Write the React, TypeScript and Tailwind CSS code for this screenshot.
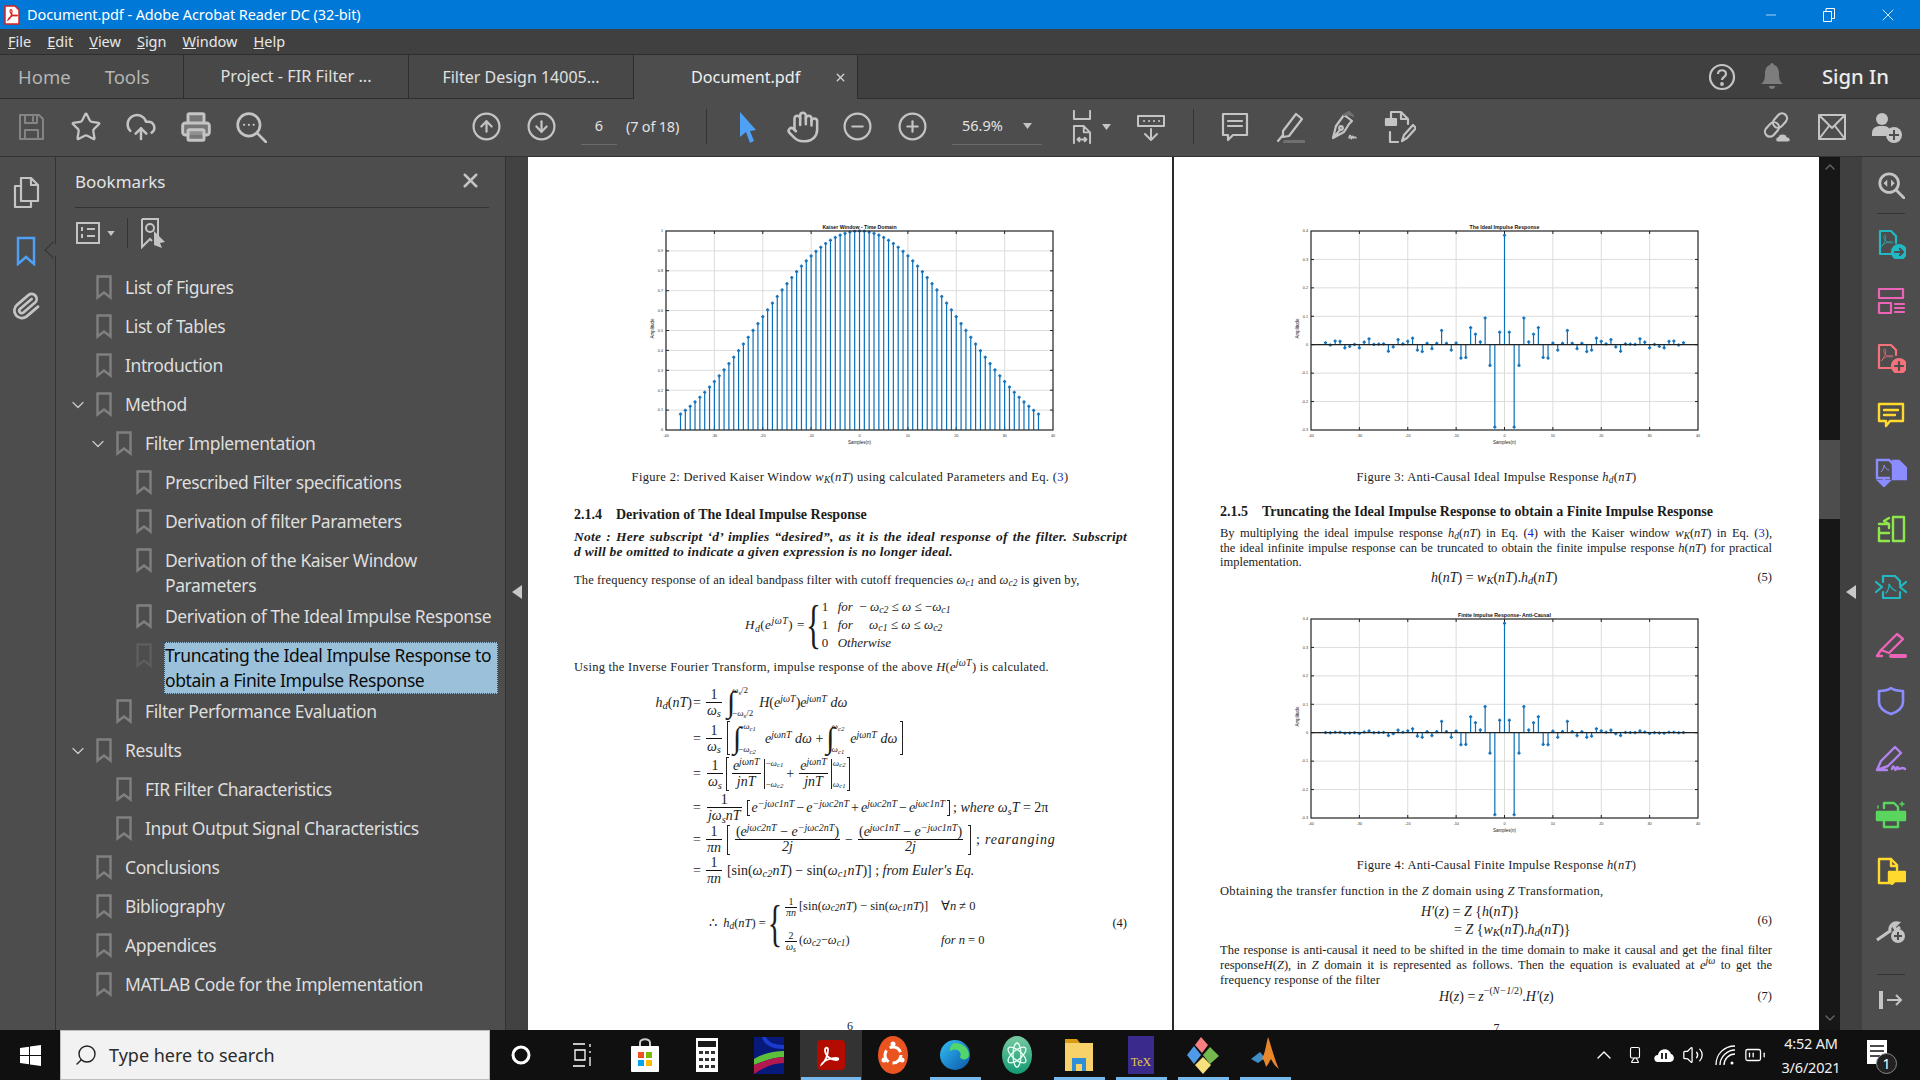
import type { ReactNode } from 'react'
import {
  Star, CloudUpload, Printer, CircleArrowUp, CircleArrowDown, Hand, CircleMinus, CirclePlus,
  Paperclip, ChevronDown, ChevronUp, X, Minus, Search, Volume2, BatteryMedium, Video,
} from 'lucide-react'

const ui = "font-['Noto_Sans',sans-serif]"
const gray = '#c4c4c4'

function Svg({ w = 30, h = 30, vb = '0 0 30 30', children, c = gray, sw = 2 }: { w?: number; h?: number; vb?: string; children: ReactNode; c?: string; sw?: number }) {
  return (
    <svg width={w} height={h} viewBox={vb} fill="none" stroke={c} strokeWidth={sw} strokeLinecap="round" strokeLinejoin="round">
      {children}
    </svg>
  )
}

const swirl = 'M6 22c3-2 6-9 6-14 0-3-3-3-3 0 0 5 6 9 11 9 3 0 3-2 0-2-5 0-12 3-14 7z'

function ToolBox({ children, w = 55 }: { children: ReactNode; w?: number }) {
  return <div className="flex items-center justify-center h-full shrink-0" style={{ width: w }}>{children}</div>
}

function Sep({ className = '' }: { className?: string }) {
  return <div className={`h-[35px] w-px bg-[#333] shrink-0 ${className}`} />
}

function TitleBar() {
  return (
    <div className={`flex h-[29px] items-center bg-[#0078d7] text-white ${ui}`}>
      <div className="ml-[4px] mr-[7px]">
        <svg width="16" height="20" viewBox="0 0 16 20">
          <path d="M1 1h10l4 4v14H1z" fill="#fff" stroke="#d8231d" strokeWidth="1.5" />
          <path d="M4 15c2-1 4-5 4-9 0-2-2-2-2 0 0 3 3 5 6 5 2 0 2-1 0-1-3 0-7 2-8 5z" fill="none" stroke="#d8231d" strokeWidth="1.2" />
        </svg>
      </div>
      <span className="text-[14.5px] tracking-[-0.1px]">Document.pdf - Adobe Acrobat Reader DC (32-bit)</span>
      <div className="ml-auto flex items-center pr-[3px]">
        <div className="w-[56px] flex justify-center"><Minus size={16} strokeWidth={1} /></div>
        <div className="w-[59px] flex justify-center">
          <svg width="12" height="14" viewBox="0 0 12 14" fill="none" stroke="#fff"><path d="M.5 3.5h8v10h-8zM3 3.5v-3h8.500v10H8.500" /></svg>
        </div>
        <div className="w-[59px] flex justify-center"><X size={20} strokeWidth={1} /></div>
      </div>
    </div>
  )
}

function MenuBar() {
  const items: [string, string][] = [['F', 'ile'], ['E', 'dit'], ['V', 'iew'], ['S', 'ign'], ['W', 'indow'], ['H', 'elp']]
  return (
    <div className={`flex h-[26px] items-center gap-[16px] border-b border-[#2e2e2e] bg-[#404040] pl-[8px] text-[14.5px] text-[#e8e8e8] ${ui}`}>
      {items.map(([a, b]) => <span key={a}><span className="underline">{a}</span>{b}</span>)}
    </div>
  )
}

function TabBar() {
  return (
    <div className={`flex h-[44px] border-b border-[#2e2e2e] bg-[#404040] ${ui}`}>
      <div className="flex w-[184px] items-center gap-[34px] border-r border-[#2e2e2e] bg-[#484848] pl-[18px] text-[18.500px] text-[#b5b5b5]">
        <span>Home</span><span>Tools</span>
      </div>
      <div className="flex w-[225px] items-center justify-center border-r border-[#2e2e2e] bg-[#484848] text-[16.300px] text-[#e0e0e0]">Project - FIR Filter ...</div>
      <div className="flex w-[225px] items-center justify-center border-r border-[#2e2e2e] bg-[#484848] text-[16px] text-[#e0e0e0]">Filter Design 14005...</div>
      <div className="-mb-px flex w-[224px] items-center border-r border-[#2e2e2e] bg-[#4d4d4d] text-[16.200px] text-[#f0f0f0]">
        <span className="ml-[57px]">Document.pdf</span>
        <X size={13} strokeWidth={2.5} className="ml-auto mr-[10px] text-[#d0d0d0]" />
      </div>
      <div className="ml-auto flex items-center">
        <svg width="28" height="32" viewBox="0 0 28 32" fill="none" stroke={gray} strokeWidth="2.2">
          <circle cx="14" cy="16" r="12" />
          <path d="M10 13c0-5 8-5 8 0 0 3-4 3-4 6" />
          <circle cx="14" cy="23" r=".8" fill={gray} />
        </svg>
        <svg className="ml-[24px]" width="24" height="32" viewBox="0 0 24 32" fill="#7d7d7d">
          <path d="M12 2c1 0 2 1 2 2 4 1 5 5 5 9 0 5 1 8 4 10H1c3-2 4-5 4-10 0-4 1-8 5-9 0-1 1-2 2-2zM9 25h6c0 4-6 4-6 0z" />
        </svg>
        <span className="ml-[38px] mr-[31px] text-[20.300px] font-medium text-[#ececec]">Sign In</span>
      </div>
    </div>
  )
}

function ToolBar() {
  return (
    <div className={`flex h-[58px] items-center border-b border-[#333] bg-[#4d4d4d] pb-[2px] pl-[3px] ${ui}`}>
      <ToolBox>
        <Svg c="#848484"><path d="M4 3h19l4 4v20H4zM9 3v8h12V3M17 5v4M9 27v-9h13v9" /></Svg>
      </ToolBox>
      <ToolBox><Star size={32} color={gray} strokeWidth={1.7} /></ToolBox>
      <ToolBox><CloudUpload size={32} color={gray} strokeWidth={1.9} /></ToolBox>
      <ToolBox><Printer size={32} color={gray} fill={gray} fillOpacity={0.35} strokeWidth={2.2} /></ToolBox>
      <ToolBox>
        <Svg w={32} h={32}>
          <circle cx="13" cy="13" r="10.500" strokeWidth="2.500" />
          <path d="M21 21l8 8" strokeWidth="2.500" />
          <path d="M8.500 13h.1M13 13h.1M17.500 13h.1" />
        </Svg>
      </ToolBox>
      <div className="w-[181px] shrink-0" />
      <ToolBox><CircleArrowUp size={31} color={gray} strokeWidth={1.7} /></ToolBox>
      <ToolBox><CircleArrowDown size={31} color={gray} strokeWidth={1.7} /></ToolBox>
      <div className="ml-[12px] flex h-[37px] w-[36px] shrink-0 items-center justify-center border-b border-[#6a6a6a] text-[14.5px] text-[#e2e2e2]">6</div>
      <span className="ml-[9px] w-[55px] shrink-0 whitespace-nowrap text-[14.5px] tracking-[-0.2px] text-[#e2e2e2]">(7 of 18)</span>
      <Sep className="ml-[25px]" />
      <div className="w-[13px] shrink-0" />
      <ToolBox>
        <svg width="18" height="32" viewBox="0 0 18 32" fill="#4ea1f5"><path d="M1 1l16 18-6 1 4 10-4 2-4-11-6 5z" /></svg>
      </ToolBox>
      <ToolBox><Hand size={34} color={gray} strokeWidth={1.8} /></ToolBox>
      <ToolBox><CircleMinus size={31} color={gray} strokeWidth={1.7} /></ToolBox>
      <ToolBox><CirclePlus size={31} color={gray} strokeWidth={1.7} /></ToolBox>
      <div className="ml-[12px] flex h-[37px] w-[90px] shrink-0 items-center border-b border-[#6a6a6a] pl-[10px] text-[14.5px] text-[#e2e2e2]">
        56.9%
        <svg className="ml-auto mr-[10px]" width="9" height="6" viewBox="0 0 9 6" fill={gray}><path d="M0 0h9L4.500 6z" /></svg>
      </div>
      <div className="ml-[21px] flex w-[38px] justify-center">
        <Svg w={24} h={34} vb="0 0 24 38" sw={2.2}>
          <path d="M3 1v9h18V1M3 37V18h11l7 7v12M14 18v7h7M7 33h10M7 33l2-2M7 33l2 2M17 33l-2-2M17 33l-2 2" />
        </Svg>
      </div>
      <svg className="ml-[1px]" width="9" height="6" viewBox="0 0 9 6" fill={gray}><path d="M0 0h9L4.500 6z" /></svg>
      <ToolBox w={79}>
        <Svg w={30} h={30}>
          <path d="M2 4h26v10H2zM8 9h.1M13 9h.1M18 9h.1M23 9h.1M15 17v11M9 22l6 6 6-6" />
        </Svg>
      </ToolBox>
      <Sep className="ml-[3px]" />
      <div className="w-[13px] shrink-0" />
      <ToolBox>
        <Svg w={28} h={32} vb="0 0 28 32" sw={2.2}><path d="M2 3h24v21H12l-5 5v-5H2zM7 10h14M7 15h14" /></Svg>
      </ToolBox>
      <ToolBox>
        <Svg w={30} h={32} vb="0 0 30 32" sw={2.2}>
          <path d="M8 20L21 3l6 5-13 17-6 1zM3 30l5-6" />
          <path d="M10 31h19" stroke="#707070" strokeWidth="4" />
        </Svg>
      </ToolBox>
      <ToolBox>
        <Svg w={30} h={32} vb="0 0 30 32" sw={2.2}>
          <path d="M3 27l3-12 8-11 3 2 5 4-3 3-5 8zM3 27l7-8" />
          <circle cx="11" cy="17" r="1.800" />
          <path d="M14 4l5-3 4 4" fill="#707070" stroke="#707070" />
          <path d="M19 27c1-4 2-3 2 0s2-4 2-1 2-2 3 1" strokeWidth="1.500" />
        </Svg>
      </ToolBox>
      <ToolBox>
        <Svg w={32} h={34} vb="0 0 32 34" sw={2.2}>
          <path d="M7 9V2h10l7 7v5M17 2v7h7M6 22v10h8" />
          <path d="M2 9h10v6H2z" fill={gray} />
          <path d="M18 31l2-6 9-10 3 3-9 10z" />
        </Svg>
      </ToolBox>
      <div className="ml-auto flex h-full pr-[6px]">
        <ToolBox>
          <Svg w={32} h={34} vb="0 0 32 34" sw={2.2}>
            <g transform="rotate(-48 15 15)">
              <rect x="1" y="10" width="16" height="10" rx="5" />
              <rect x="13" y="10" width="16" height="10" rx="5" />
            </g>
            <path d="M17 32c-3 0-3-5 0-5 1-4 8-4 9 0 4 0 4 5 1 5z" fill={gray} stroke="#4d4d4d" strokeWidth="1" />
          </Svg>
        </ToolBox>
        <ToolBox>
          <Svg w={30} h={28} vb="0 0 30 28"><path d="M2 2h26v24H2zM2 2l13 13L28 2M2 26l10-13M28 26L18 13" /></Svg>
        </ToolBox>
        <ToolBox>
          <svg width="32" height="34" viewBox="0 0 32 34" fill={gray}>
            <circle cx="11" cy="9" r="6" />
            <path d="M1 24c0-7 4-8 10-8s8 2 8 5c-3 1-4 3-4 5H1z" />
            <circle cx="23" cy="25" r="8" />
            <path d="M23 20v10M18 25h10" stroke="#4d4d4d" strokeWidth="2" />
          </svg>
        </ToolBox>
      </div>
    </div>
  )
}

function LeftRail() {
  return (
    <div className="flex w-[56px] shrink-0 flex-col items-center border-r border-[#333] bg-[#4d4d4d] pr-[3px]">
      <div className="mt-[20px]">
        <Svg w={28} h={32} vb="0 0 28 32" sw={2.2}>
          <path d="M9 1h10l7 7v16H9zM19 1v7h7M9 9H3v21h16v-6" />
        </Svg>
      </div>
      <div className="relative mt-[27px]">
        <svg width="20" height="30" viewBox="0 0 20 30" fill="none" stroke="#4ea1f5" strokeWidth="2.500"><path d="M2 2h16v26l-8-7-8 7z" /></svg>
        <div className="absolute left-[31px] top-[8px] h-[12px] w-[12px] rotate-45 border-b border-l border-[#333] bg-[#4d4d4d]" />
      </div>
      <div className="mt-[25px]"><Paperclip size={30} color={gray} strokeWidth={2.2} className="rotate-[5deg]" /></div>
    </div>
  )
}

type Bm = { t: string; lvl: number; open?: boolean; two?: boolean; sel?: boolean }

const marks: Bm[] = [
  { t: 'List of Figures', lvl: 0 },
  { t: 'List of Tables', lvl: 0 },
  { t: 'Introduction', lvl: 0 },
  { t: 'Method', lvl: 0, open: true },
  { t: 'Filter Implementation', lvl: 1, open: true },
  { t: 'Prescribed Filter specifications', lvl: 2 },
  { t: 'Derivation of filter Parameters', lvl: 2 },
  { t: 'Derivation of the Kaiser Window Parameters', lvl: 2, two: true },
  { t: 'Derivation of The Ideal Impulse Response', lvl: 2 },
  { t: 'Truncating the Ideal Impulse Response to obtain a Finite Impulse Response', lvl: 2, two: true, sel: true },
  { t: 'Filter Performance Evaluation', lvl: 1 },
  { t: 'Results', lvl: 0, open: true },
  { t: 'FIR Filter Characteristics', lvl: 1 },
  { t: 'Input Output Signal Characteristics', lvl: 1 },
  { t: 'Conclusions', lvl: 0 },
  { t: 'Bibliography', lvl: 0 },
  { t: 'Appendices', lvl: 0 },
  { t: 'MATLAB Code for the Implementation', lvl: 0 },
]

function BookmarkRow({ m }: { m: Bm }) {
  return (
    <div className={`flex items-start ${m.two ? 'h-[56px]' : 'h-[39px]'}`} style={{ paddingLeft: 12 + m.lvl * 20 }}>
      <div className="flex h-[39px] w-[28px] shrink-0 items-center justify-start">
        {m.open ? <ChevronDown size={20} color="#c8c8c8" strokeWidth={1.6} /> : null}
      </div>
      <svg className="mt-[7px] shrink-0" width="16" height="25" viewBox="0 0 16 25" fill="none" stroke={m.sel ? '#5e5e5e' : '#808080'} strokeWidth="2.400">
        <path d="M1.500 1.500h13v21l-6.500-5-6.500 5z" />
      </svg>
      {m.sel ? (
        <div className="ml-[12px] mt-[6px] w-[334px] border border-dotted border-[#2c4a60] bg-[#9bc1da] text-[#0b0b0b] leading-[25px]">{m.t}</div>
      ) : (
        <div className={`ml-[13px] mt-[7px] leading-[25px] text-[#dedede] ${m.lvl === 2 ? 'w-[338px]' : ''}`}>{m.t}</div>
      )}
    </div>
  )
}

function BookmarksPanel() {
  return (
    <div className={`flex w-[449px] shrink-0 flex-col bg-[#4d4d4d] ${ui}`}>
      <div className="ml-[19px] mr-[16px] flex h-[51px] items-center justify-between border-b border-[#333]">
        <span className="text-[17px] text-[#e4e4e4]">Bookmarks</span>
        <X size={23} color={gray} strokeWidth={2.6} className="mr-[7px] -mt-[3px]" />
      </div>
      <div className="ml-[20px] flex h-[50px] shrink-0 items-center">
        <svg width="24" height="24" viewBox="0 0 24 24" fill="none" stroke={gray} strokeWidth="2"><rect x="1" y="2" width="22" height="20" /><path d="M5 8h2M5 15h2" strokeWidth="4" /><path d="M11 8h8M11 15h8" /></svg>
        <svg className="ml-[7px]" width="8" height="5" viewBox="0 0 9 6" fill={gray}><path d="M0 0h9L4.500 6z" /></svg>
        <div className="mx-[12px] h-[30px] w-px bg-[#333]" />
        <svg width="26" height="32" viewBox="0 0 26 32" fill="none" stroke={gray} strokeWidth="2">
          <path d="M2 2h16v19M2 2v28l8-8 2 2" />
          <circle cx="10" cy="11" r="4" />
          <path d="M14 14l11 11-5 1 2 5-8-3z" fill={gray} stroke="none" />
        </svg>
      </div>
      <div className="mt-[10px] text-[17.5px] tracking-[-0.4px]">
        {marks.map((m) => <BookmarkRow key={m.t} m={m} />)}
      </div>
    </div>
  )
}

function kaiser(n: number) {
  const i0 = (x: number) => {
    let s = 1
    let t = 1
    for (let k = 1; k < 20; k++) {
      t *= (x / (2 * k)) * (x / (2 * k))
      s += t
    }
    return s
  }
  const b = 4.25
  return i0(b * Math.sqrt(1 - (n / 37.5) ** 2)) / i0(b)
}

const ideal = [0.385, 0.044, -0.29, -0.073, 0.094, 0.01, 0.037, 0.06, -0.045, -0.047, 0.006, -0.019, 0.005, 0.05, 0.005, -0.014, 0.005, -0.024, -0.019, 0.023, 0.012, 0.003, 0.018, -0.008, -0.023, 0.003, 0.002, 0.001, 0.021, 0.009, -0.011, 0.001, -0.006, -0.011, 0.012, 0.013, -0.001, 0.007]
const ns = Array.from({ length: 75 }, (_, i) => i - 37)

function Stem({ title, ylabel, data, ymin, ymax, yticks }: { title: string; ylabel: string; data: (n: number) => number; ymin: number; ymax: number; yticks: number[] }) {
  const x0 = 26
  const x1 = 413
  const y0 = 8
  const y1 = 207
  const sx = (n: number) => x0 + ((n + 40) / 80) * (x1 - x0)
  const sy = (v: number) => y1 - ((v - ymin) / (ymax - ymin)) * (y1 - y0)
  const xt = [-40, -30, -20, -10, 0, 10, 20, 30, 40]
  const base = sy(Math.max(0, ymin))
  return (
    <svg width="430" height="226" viewBox="0 0 430 226" className="shrink-0 font-['Liberation_Sans',sans-serif]">
      <text x={(x0 + x1) / 2} y="5.500" textAnchor="middle" fontSize="5.200" fontWeight="700" fill="#111">{title}</text>
      {xt.slice(1, -1).map((t) => <line key={t} x1={sx(t)} x2={sx(t)} y1={y0} y2={y1} stroke="#dcdcdc" />)}
      {yticks.slice(1, -1).map((t) => <line key={t} x1={x0} x2={x1} y1={sy(t)} y2={sy(t)} stroke="#dcdcdc" />)}
      {xt.slice(1, -1).map((t) => (
        <g key={t} stroke="#222"><line x1={sx(t)} x2={sx(t)} y1={y0} y2={y0 + 3} /><line x1={sx(t)} x2={sx(t)} y1={y1 - 3} y2={y1} /></g>
      ))}
      {yticks.slice(1, -1).map((t) => (
        <g key={t} stroke="#222"><line x1={x0} x2={x0 + 3} y1={sy(t)} y2={sy(t)} /><line x1={x1 - 3} x2={x1} y1={sy(t)} y2={sy(t)} /></g>
      ))}
      {ns.map((n) => <line key={n} x1={sx(n)} x2={sx(n)} y1={base} y2={sy(data(n))} stroke="#0b6fb8" strokeWidth="1.200" />)}
      {ns.map((n) => (
        <g key={n} stroke="#1573bc">
          <line x1={sx(n) - 1.6} x2={sx(n) + 1.6} y1={sy(data(n))} y2={sy(data(n))} strokeWidth="1.500" />
          <line x1={sx(n)} x2={sx(n)} y1={sy(data(n)) - 1.6} y2={sy(data(n)) + 1.6} strokeWidth="1.500" />
        </g>
      ))}
      {ymin < 0 ? <line x1={x0} x2={x1} y1={base} y2={base} stroke="#222" strokeWidth="1.200" /> : null}
      <rect x={x0} y={y0} width={x1 - x0} height={y1 - y0} fill="none" stroke="#222" strokeWidth="1.200" />
      {xt.map((t) => <text key={t} x={sx(t)} y="214" textAnchor="middle" fontSize="3.800" fill="#333">{t}</text>)}
      {yticks.map((t) => <text key={t} x={x0 - 3} y={sy(t) + 1.3} textAnchor="end" fontSize="3.800" fill="#333">{t}</text>)}
      <text x={(x0 + x1) / 2} y="221" textAnchor="middle" fontSize="4.500" fill="#222">Samples(n)</text>
      <text transform={`translate(14 ${(y0 + y1) / 2 - 2}) rotate(-90)`} textAnchor="middle" fontSize="4.500" fill="#222">{ylabel}</text>
    </svg>
  )
}

const windowTicks = [0, 0.1, 0.2, 0.3, 0.4, 0.5, 0.6, 0.7, 0.8, 0.9, 1]
const impTicks = [-0.3, -0.2, -0.1, 0, 0.1, 0.2, 0.3, 0.4]

const Ref = ({ n }: { n: number }) => <span>(<span className="text-[#1a1ad0]">{n}</span>)</span>
const Wc = ({ n, minus }: { n: number; minus?: boolean }) => <span>{minus ? '−' : ''}<i>ω</i><sub className="italic">c{n}</sub></span>
const Ws = () => <span><i>ω</i><sub className="italic">s</sub></span>
const Hd = () => <span><i>h</i><sub className="italic">d</sub>(<i>nT</i>)</span>
const Wk = () => <span><i>w</i><sub className="italic">K</sub>(<i>nT</i>)</span>

function Frac({ n, d, lh = 15 }: { n: ReactNode; d: ReactNode; lh?: number }) {
  return (
    <span className="mx-[2px] inline-flex flex-col items-center whitespace-nowrap">
      <span className="w-full border-b border-[#111] px-[1px] text-center" style={{ lineHeight: `${lh}px` }}>{n}</span>
      <span className="px-[1px]" style={{ lineHeight: `${lh}px` }}>{d}</span>
    </span>
  )
}

function Int({ hi, lo }: { hi: ReactNode; lo: ReactNode }) {
  return (
    <span className="inline-flex items-center">
      <span className="text-[30px] italic leading-none">∫</span>
      <span className="-ml-[3px] flex h-[32px] flex-col justify-between text-[9px] leading-[9px]"><span>{hi}</span><span>{lo}</span></span>
    </span>
  )
}

function Br({ h = 36, right }: { h?: number; right?: boolean }) {
  return <span className={`inline-block w-[3px] shrink-0 border-y border-[#222] ${right ? 'border-r' : 'border-l'}`} style={{ height: h }} />
}

const Sup = ({ children }: { children: ReactNode }) => <sup className="italic text-[10px]">{children}</sup>

function AlignRow({ h, left, tight, children }: { h: number; left?: ReactNode; tight?: boolean; children: ReactNode }) {
  return (
    <div className="flex items-center whitespace-nowrap" style={{ height: h }}>
      <div className="w-[50px] shrink-0 text-right">{left}</div>
      <div className={`ml-[1px] flex items-center ${tight ? 'gap-[1px]' : 'gap-[3px]'}`}>{children}</div>
    </div>
  )
}

function PageOne() {
  return (
    <div className="relative flex h-full w-[644px] shrink-0 flex-col overflow-hidden bg-white pt-[66px] font-['Liberation_Serif',serif] text-[12.500px] text-[#1c1c1c]">
      <div className="ml-[112px]">
        <Stem title="Kaiser Window - Time Domain" ylabel="Amplitude" data={(n) => kaiser(n)} ymin={0} ymax={1} yticks={windowTicks} />
      </div>
      <div className="mt-[20px] h-[16px] text-center leading-[16px] tracking-[.33px]">Figure 2: Derived Kaiser Window <Wk /> using calculated Parameters and Eq. <Ref n={3} /></div>
      <div className="ml-[46px] mr-[45px] mt-[21px] flex flex-col">
        <div className="flex h-[16px] items-center text-[14px] font-bold">
          <span className="w-[42px]">2.1.4</span>Derivation of The Ideal Impulse Response
        </div>
        <div className="mt-[7px] text-[13.500px] font-bold italic leading-[15px] tracking-[.25px]">
          <div className="whitespace-nowrap [text-align-last:justify]">Note : Here subscript ‘d’ implies “desired”, as it is the ideal response of the filter. Subscript</div>
          <div>d will be omitted to indicate a given expression is no longer ideal.</div>
        </div>
        <div className="mt-[13px] h-[16px] leading-[16px] tracking-[.12px]">The frequency response of an ideal bandpass filter with cutoff frequencies <Wc n={1} /> and <Wc n={2} /> is given by,</div>
        <div className="ml-[171px] mt-[10px] flex h-[54px] items-center text-[13px]">
          <span className="whitespace-nowrap tracking-[.5px]"><i>H</i><sub className="italic">d</sub>(<i>e</i><Sup>jωT</Sup>) =</span>
          <span className="ml-[-4px] scale-x-[.6] text-[52px] font-light leading-none">{'{'}</span>
          <div className="ml-[-4px] grid grid-cols-[16px_1fr] leading-[18px] whitespace-nowrap">
            <span>1</span><span><i>for</i>&nbsp; − <Wc n={2} /> ≤ <i>ω</i> ≤ <Wc n={1} minus /></span>
            <span>1</span><span><i>for</i>&nbsp;&nbsp;&nbsp;&nbsp; <Wc n={1} /> ≤ <i>ω</i> ≤ <Wc n={2} /></span>
            <span>0</span><span><i>Otherwise</i></span>
          </div>
        </div>
        <div className="mt-[7px] h-[16px] leading-[16px] tracking-[.27px]">Using the Inverse Fourier Transform, impulse response of the above <i>H</i>(<i>e</i><Sup>jωT</Sup>) is calculated.</div>
        <div className="ml-[68px] mt-[9px] text-[14px]">
          <AlignRow h={36} left={<Hd />}>
            <span>=</span><Frac n="1" d={<Ws />} /><Int hi={<span><i>ω</i><sub>s</sub>/2</span>} lo={<span>−<i>ω</i><sub>s</sub>/2</span>} />
            <span className="ml-[3px]"><i>H</i>(<i>e</i><Sup>jωT</Sup>)<i>e</i><Sup>jωnT</Sup> <i>dω</i></span>
          </AlignRow>
          <AlignRow h={36}>
            <span>=</span><Frac n="1" d={<Ws />} /><Br h={34} /><Int hi={<Wc n={1} minus />} lo={<Wc n={2} minus />} />
            <span className="ml-[6px]"><i>e</i><Sup>jωnT</Sup> <i>dω</i> +</span><Int hi={<Wc n={2} />} lo={<Wc n={1} />} />
            <span className="ml-[3px]"><i>e</i><Sup>jωnT</Sup> <i>dω</i></span><Br h={34} right />
          </AlignRow>
          <AlignRow h={35} tight>
            <span className="mr-[3px]">=</span><Frac n="1" d={<Ws />} /><Br h={34} /><Frac n={<span><i>e</i><Sup>jωnT</Sup></span>} d={<i>jnT</i>} />
            <span className="flex h-[30px] flex-col justify-between border-l border-[#222] pl-[1px] text-[9px] leading-[9px]"><Wc n={1} minus /><Wc n={2} minus /></span>
            <span className="mx-[2px]">+</span>
            <Frac n={<span><i>e</i><Sup>jωnT</Sup></span>} d={<i>jnT</i>} />
            <span className="flex h-[30px] flex-col justify-between border-l border-[#222] pl-[1px] text-[9px] leading-[9px]"><Wc n={2} /><Wc n={1} /></span>
            <Br h={34} right />
          </AlignRow>
          <AlignRow h={33} tight>
            <span className="mr-[3px]">=</span><Frac n="1" d={<span><i>jω</i><sub className="italic">s</sub><i>nT</i></span>} />
            <span className="ml-[2px] flex items-center gap-[2px]"><Br h={16} /><span><i>e</i><Sup>−jωc1nT</Sup></span>−<span><i>e</i><Sup>−jωc2nT</Sup></span>+<span><i>e</i><Sup>jωc2nT</Sup></span>−<span><i>e</i><Sup>jωc1nT</Sup></span><Br h={16} right /></span>
            <span className="ml-[2px]">; <i>where ω</i><sub className="italic">s</sub><i>T</i> = 2π</span>
          </AlignRow>
          <AlignRow h={31}>
            <span>=</span><Frac n="1" d={<i>πn</i>} /><Br h={30} />
            <Frac lh={14} n={<span>(<i>e</i><Sup>jωc2nT</Sup> − <i>e</i><Sup>−jωc2nT</Sup>)</span>} d={<i>2j</i>} />
            <span>−</span>
            <Frac lh={14} n={<span>(<i>e</i><Sup>jωc1nT</Sup> − <i>e</i><Sup>−jωc1nT</Sup>)</span>} d={<i>2j</i>} />
            <Br h={30} right /><span className="ml-[2px] tracking-[.8px]">; <i>rearanging</i></span>
          </AlignRow>
          <AlignRow h={30}>
            <span>=</span><Frac n="1" d={<i>πn</i>} />
            <span>[sin(<i>ω</i><sub className="italic">c2</sub><i>nT</i>) − sin(<i>ω</i><sub className="italic">c1</sub><i>nT</i>)] ; <i>from Euler′s Eq.</i></span>
          </AlignRow>
        </div>
        <div className="ml-[135px] mt-[16px] flex h-[44px] items-center whitespace-nowrap">
          <span>∴&nbsp;&nbsp;<Hd /> =</span>
          <span className="ml-[-3px] scale-x-[.6] text-[50px] font-light leading-none">{'{'}</span>
          <div className="ml-[-4px] grid grid-cols-[158px_1fr] items-center gap-y-[10px]">
            <span className="flex items-center"><span className="text-[10px]"><Frac lh={10} n="1" d={<i>πn</i>} /></span>[sin(<i>ω</i><sub className="italic">c2</sub><i>nT</i>) − sin(<i>ω</i><sub className="italic">c1</sub><i>nT</i>)]</span>
            <span>∀<i>n</i> ≠ 0</span>
            <span className="flex items-center"><span className="text-[10px]"><Frac lh={10} n="2" d={<Ws />} /></span>(<Wc n={2} /> − <Wc n={1} />)</span>
            <span><i>for n</i> = 0</span>
          </div>
          <span className="ml-auto">(4)</span>
        </div>
      </div>
      <div className="mt-[75px] text-center text-[12px] leading-[12px]">6</div>
    </div>
  )
}

function PageTwo() {
  const Z = () => <i>Z</i>
  return (
    <div className="relative flex h-full w-[645px] shrink-0 flex-col overflow-hidden bg-white pt-[66px] font-['Liberation_Serif',serif] text-[12.500px] text-[#1c1c1c]">
      <div className="ml-[111px]">
        <Stem title="The Ideal Impulse Response" ylabel="Amplitude" data={(n) => ideal[Math.abs(n)]} ymin={-0.3} ymax={0.4} yticks={impTicks} />
      </div>
      <div className="mt-[20px] h-[16px] text-center leading-[16px] tracking-[.26px]">Figure 3: Anti-Causal Ideal Impulse Response <Hd /></div>
      <div className="ml-[46px] mr-[47px] mt-[18px] flex h-[16px] items-center whitespace-nowrap text-[14px] font-bold">
        <span className="w-[42px]">2.1.5</span>Truncating the Ideal Impulse Response to obtain a Finite Impulse Response
      </div>
      <div className="ml-[46px] mr-[47px] mt-[7px] leading-[14.500px]">
        <div className="[text-align-last:justify]">By multiplying the ideal impulse response <Hd /> in Eq. <Ref n={4} /> with the Kaiser window <Wk /> in Eq. <Ref n={3} />,</div>
        <div className="[text-align-last:justify]">the ideal infinite impulse response can be truncated to obtain the finite impulse response <i>h</i>(<i>nT</i>) for practical</div>
        <div>implementation.</div>
      </div>
      <div className="ml-[46px] mr-[47px] flex h-[15px] items-center">
        <span className="ml-[211px] text-[14px]"><i>h</i>(<i>nT</i>) = <Wk />.<Hd /></span>
        <span className="ml-auto">(5)</span>
      </div>
      <div className="ml-[111px] mt-[26px]">
        <Stem title="Finite Impulse Response- Anti-Causal" ylabel="Amplitude" data={(n) => ideal[Math.abs(n)] * kaiser(n)} ymin={-0.3} ymax={0.4} yticks={impTicks} />
      </div>
      <div className="mt-[20px] h-[16px] text-center leading-[16px] tracking-[.26px]">Figure 4: Anti-Causal Finite Impulse Response <i>h</i>(<i>nT</i>)</div>
      <div className="ml-[46px] mr-[47px] mt-[10px] h-[16px] leading-[16px] tracking-[.33px]">Obtaining the transfer function in the <Z /> domain using <Z /> Transformation,</div>
      <div className="ml-[46px] mr-[47px] mt-[4px] flex h-[36px] items-center">
        <div className="ml-[201px] text-[14px] leading-[18px]">
          <div><i>H′</i>(<i>z</i>) = <Z /> {'{'}<i>h</i>(<i>nT</i>){'}'}</div>
          <div className="ml-[33px]">= <Z /> {'{'}<Wk />.<Hd />{'}'}</div>
        </div>
        <span className="ml-auto">(6)</span>
      </div>
      <div className="ml-[46px] mr-[47px] mt-[4px] leading-[15px]">
        <div className="[text-align-last:justify]">The response is anti-causal it need to be shifted in the time domain to make it causal and get the final filter</div>
        <div className="[text-align-last:justify]">response<i>H</i>(<i>Z</i>), in <Z /> domain it is represented as follows. Then the equation is evaluated at <i>e</i><Sup>jω</Sup> to get the</div>
        <div className="tracking-[.12px]">frequency response of the filter</div>
      </div>
      <div className="ml-[46px] mr-[47px] flex h-[17px] items-center">
        <span className="ml-[219px] flex items-center text-[14px]"><i>H</i>(<i>z</i>) = <i className="ml-[3px]">z</i><sup className="text-[10px]">−(<i>N−1</i>/2)</sup>.<i>H′</i>(<i>z</i>)</span>
        <span className="ml-auto">(7)</span>
      </div>
      <div className="mt-[17px] text-center text-[12px] leading-[12px]">7</div>
    </div>
  )
}

function Triangle() {
  return <svg width="10" height="14" viewBox="0 0 10 14" fill="#c8c8c8"><path d="M10 0v14L0 7z" /></svg>
}

function DocArea() {
  return (
    <div className="flex min-w-0 flex-1">
      <div className="flex w-[23px] shrink-0 items-center justify-center border-l border-[#333] bg-[#424242] pb-[3px]"><Triangle /></div>
      <PageOne />
      <div className="w-[2px] shrink-0 bg-[#2a2a2a]" />
      <PageTwo />
      <div className="flex w-[21px] shrink-0 flex-col items-center bg-[#171717]">
        <ChevronUp size={16} color="#666" className="mt-[2px]" />
        <div className="mt-[265px] h-[79px] w-full bg-[#4d4d4d]" />
        <ChevronDown size={16} color="#666" className="mt-auto mb-[4px]" />
      </div>
      <div className="flex w-[22px] shrink-0 items-center justify-center bg-[#404040] pb-[3px]"><Triangle /></div>
    </div>
  )
}

function RightRail() {
  const teal = '#20b9c4'
  const pink = '#ec64b8'
  const coral = '#f6727a'
  const yellow = '#ffd92e'
  const peri = '#8b8cff'
  const lime = '#8fe84b'
  const purple = '#b183ee'
  const green = '#5ad65f'
  const Item = ({ children }: { children: ReactNode }) => <div className="flex h-[57.200px] shrink-0 items-center justify-center">{children}</div>
  return (
    <div className="flex w-[58px] shrink-0 flex-col items-center bg-[#4d4d4d]">
      <div className="flex h-[56px] w-full shrink-0 items-center justify-center">
        <Svg w={28} h={28} sw={3} vb="0 0 30 30"><circle cx="13" cy="13" r="10" /><path d="M21 21l8 8" /><path d="M11 9l-4 4 4 4zM15 9l4 4-4 4z" fill={gray} stroke="none" /></Svg>
      </div>
      <div className="h-px w-[28px] shrink-0 bg-[#333]" />
      <div className="mt-[1px] flex h-[57px] shrink-0 items-center justify-center">
        <Svg w={30} h={30} c={teal} sw={2.2}><path d="M20 14V7l-5-5H4v23h11" /><path d={swirl} strokeWidth="1" transform="scale(.7) translate(2 3)" /><circle cx="23" cy="23" r="7" fill={teal} /><path d="M19 23h8M24 20l3 3-3 3" stroke="#4d4d4d" /></Svg>
      </div>
      <Item><Svg w={30} h={30} c={pink} sw={2.2}><path d="M3 3h24v9H3zM3 17h12v10H3zM19 18h9M19 22h9M19 26h9" /></Svg></Item>
      <Item><Svg w={30} h={30} c={coral} sw={2.2}><path d="M20 12V7l-5-5H3v23h12" /><path d={swirl} strokeWidth="1" transform="scale(.7) translate(2 3)" /><circle cx="23" cy="23" r="7" fill={coral} /><path d="M23 19v8M19 23h8" stroke="#4d4d4d" /></Svg></Item>
      <Item><Svg w={28} h={26} vb="0 0 28 26" c={yellow} sw={2.4}><path d="M2 2h24v17H13l-4 5v-5H2zM7 8h14M7 13h11" /></Svg></Item>
      <Item><svg width="32" height="30" viewBox="0 0 32 30" fill="none" stroke={peri} strokeWidth="2.400"><path d="M15 21H2V3h12l4 4v3" /><path d="M6 15c2-2 3-5 3-7 1 3 3 5 5 5" strokeWidth="1" /><path d="M18 4h6l7 7v11H18z" fill={peri} /><path d="M9 20v4M4 24h10l-5 5z" fill={peri} /></svg></Item>
      <Item><Svg w={30} h={28} vb="0 0 30 28" c={lime} sw={2.4}><path d="M17 2h11v24H17zM13 3L8 6l5 3M3 9h10v4M3 18h10M3 26h10M3 13v13" /></Svg></Item>
      <Item><Svg w={32} h={28} vb="0 0 32 28" c={teal} sw={2.2}><path d="M8 3h12l5 5v4M8 3v6M25 19v6H8v-6M1 9l6 5-6 5M31 9l-6 5 6 5" /><path d="M11 20c2-2 3-6 3-9 2 4 4 6 7 7" strokeWidth="1.200" /></Svg></Item>
      <Item><Svg w={32} h={28} vb="0 0 32 28" c={pink} sw={2.4}><path d="M6 20L22 4l6 5-14 14zM2 26h5M6 20l-4 6" /><path d="M16 26h14" strokeWidth="4" /></Svg></Item>
      <Item><Svg w={28} h={30} vb="0 0 28 30" c={peri} sw={2.6}><path d="M14 2c4 3 8 3 12 3v11c0 6-6 10-12 12C8 26 2 22 2 16V5c4 0 8 0 12-3z" /></Svg></Item>
      <Item><Svg w={32} h={28} vb="0 0 32 28" c={purple} sw={2.4}><path d="M2 26l4-9L20 3l6 6-13 13zM2 26h10M17 25c1-4 2-3 3 0s2-4 3-1 3-2 7 1" /></Svg></Item>
      <Item><Svg w={32} h={30} vb="0 0 32 30" c={green} sw={2.4}><path d="M9 8V3h10l4 4v5M9 20v7h14v-7" /><path d="M2 12h28v8H2z" fill={green} /><path d="M27 2v4M25 4h4M3 6v2" strokeWidth="1.400" /></Svg></Item>
      <Item><Svg w={30} h={30} c={yellow} sw={2.4}><path d="M15 26H3V2h12l6 6v5" /><path d="M15 2v7h6" /><path d="M13 15h16v9H19l-3 3v-3h-3z" fill={yellow} /></Svg></Item>
      <Item><svg width="32" height="28" viewBox="0 0 32 28" fill="none" stroke={gray} strokeWidth="3"><path d="M2 24l13-9c-1-5 3-9 8-8l-4 4 2 3 4-3" /><circle cx="23" cy="20" r="7" fill={gray} stroke="none" /><path d="M23 16v8M19 20h8" stroke="#4d4d4d" strokeWidth="2" /></svg></Item>
      <div className="mt-[16px] h-px w-[28px] shrink-0 bg-[#333]" />
      <div className="mt-[15px]">
        <svg width="24" height="20" viewBox="0 0 24 20" fill="none" stroke={gray} strokeWidth="2.500"><path d="M2 1v18" strokeWidth="4" /><path d="M8 10h14M17 5l5 5-5 5" strokeWidth="2" /></svg>
      </div>
    </div>
  )
}

function TaskIcon({ children, on, bg }: { children?: ReactNode; on?: boolean; bg?: boolean }) {
  return (
    <div className={`relative flex h-full w-[62px] shrink-0 items-center justify-center ${bg ? 'bg-[#333]' : ''}`}>
      {children}
      {on ? <div className={`absolute bottom-0 h-[3px] bg-[#76b9ed] ${bg ? 'left-[1px] right-[1px]' : 'left-[6px] right-[5px]'}`} /> : null}
    </div>
  )
}

function TaskBar() {
  return (
    <div className={`flex h-[50px] shrink-0 items-center bg-[#101010] text-white ${ui}`}>
      <div className="flex h-full w-[60px] shrink-0 items-center justify-center">
        <svg width="21" height="21" viewBox="0 0 21 21" fill="#fff"><path d="M0 3l9-1.300V10H0zM10 1.500L21 0v10H10zM0 11h9v8.300L0 18zM10 11h11v10l-11-1.500z" /></svg>
      </div>
      <div className="flex h-full w-[430px] shrink-0 items-center border border-[#bdbdbd] bg-[#f2f2f2] pl-[13px] text-[18px] text-[#2b2b2b]">
        <Search size={24} color="#222" strokeWidth={1.4} className="-scale-x-100" />
        <span className="ml-[11px]">Type here to search</span>
      </div>
      <div className="flex h-full shrink-0">
        <TaskIcon><svg width="20" height="20" viewBox="0 0 20 20" fill="none" stroke="#fff" strokeWidth="3"><circle cx="10" cy="10" r="8" /></svg></TaskIcon>
        <TaskIcon><svg width="20" height="24" viewBox="0 0 20 24" fill="none" stroke="#fff" strokeWidth="1.300"><path d="M0 1h12M0 23h12M2 7h10v10H2zM17 1v3M17 8v2M17 14v9" /></svg></TaskIcon>
        <TaskIcon>
          <svg width="30" height="34" viewBox="0 0 30 34">
            <path d="M10 10V5c0-5 10-5 10 0v5" fill="none" stroke="#ccc" strokeWidth="2" />
            <rect x="1" y="8" width="28" height="26" rx="1" fill="#fff" />
            <path d="M8 14h6v6H8z" fill="#f25022" /><path d="M16 14h6v6h-6z" fill="#7fba00" /><path d="M8 22h6v6H8z" fill="#00a4ef" /><path d="M16 22h6v6h-6z" fill="#ffb900" />
          </svg>
        </TaskIcon>
        <TaskIcon>
          <svg width="22" height="34" viewBox="0 0 22 34">
            <rect width="22" height="34" fill="#fff" />
            <rect x="2" y="3" width="18" height="6" fill="#1a1a1a" />
            <path d="M3 13h4v3H3zM9 13h4v3H9zM15 13h4v3h-4zM3 20h4v3H3zM9 20h4v3H9zM15 20h4v3h-4zM3 27h4v3H3zM9 27h4v3H9zM15 27h4v3h-4z" fill="#333" />
          </svg>
        </TaskIcon>
        <TaskIcon>
          <svg width="30" height="37" viewBox="0 0 30 37">
            <rect width="30" height="37" fill="#071a7a" />
            <path d="M0 22c10-6 20-8 30-8v6C20 20 10 24 0 28z" fill="#5cc03a" />
            <path d="M0 28c10-4 20-8 30-8v6C20 26 10 30 0 37z" fill="#b5174f" />
            <path d="M8 0c2 8 10 12 22 12V8C20 8 14 5 12 0z" fill="#1b3bd0" />
          </svg>
        </TaskIcon>
        <TaskIcon on bg>
          <svg width="28" height="30" viewBox="0 0 28 30">
            <rect width="28" height="30" rx="4" fill="#b30b00" />
            <path d="M5 24c3-2 6-9 6-14 0-3-3-3-3 0 0 6 6 10 11 10 3 0 3-2 0-2-5 0-12 2-14 6z" fill="none" stroke="#fff" strokeWidth="1.800" />
          </svg>
        </TaskIcon>
        <TaskIcon>
          <svg width="30" height="38" viewBox="0 0 30 38">
            <ellipse cx="15" cy="19" rx="15" ry="19" fill="#e95420" />
            <circle cx="15" cy="19" r="8" fill="none" stroke="#fff" strokeWidth="3" strokeDasharray="13 4" />
            <circle cx="15" cy="8" r="2.500" fill="#fff" /><circle cx="6" cy="24" r="2.500" fill="#fff" /><circle cx="24" cy="24" r="2.500" fill="#fff" />
          </svg>
        </TaskIcon>
        <TaskIcon on>
          <svg width="30" height="32" viewBox="0 0 30 32">
            <defs><linearGradient id="edge" x1="0" y1="0" x2="1" y2="1"><stop offset="0" stopColor="#35c1f1" /><stop offset=".6" stopColor="#1a7fc8" /><stop offset="1" stopColor="#0c59a4" /></linearGradient></defs>
            <circle cx="15" cy="16" r="15" fill="url(#edge)" />
            <path d="M15 4c8 0 14 5 14 12 0 5-8 6-9 2 3-6-5-10-10-6-1-3 2-8 5-8z" fill="#52d66b" />
          </svg>
        </TaskIcon>
        <TaskIcon>
          <svg width="30" height="38" viewBox="0 0 30 38">
            <defs><linearGradient id="atom" x1="0" y1="0" x2="0" y2="1"><stop offset="0" stopColor="#78c9a0" /><stop offset="1" stopColor="#129a73" /></linearGradient></defs>
            <ellipse cx="15" cy="19" rx="15" ry="19" fill="url(#atom)" />
            <g fill="none" stroke="#e8fff4" strokeWidth="1.300"><ellipse cx="15" cy="19" rx="11" ry="4.500" transform="rotate(40 15 19)" /><ellipse cx="15" cy="19" rx="11" ry="4.500" transform="rotate(-40 15 19)" /><ellipse cx="15" cy="19" rx="4" ry="12" /></g>
          </svg>
        </TaskIcon>
        <TaskIcon on>
          <svg width="28" height="36" viewBox="0 0 28 36">
            <path d="M0 2h12l3 4h-15z" fill="#d99a14" />
            <rect y="6" width="28" height="28" fill="#f7d26a" />
            <path d="M7 21h14v13h-4v-7h-6v7H7z" fill="#2e8fd6" />
          </svg>
        </TaskIcon>
        <TaskIcon on>
          <div className="flex h-[38px] w-[26px] items-end justify-center bg-[#3a2a8c] pb-[6px] font-['Liberation_Serif',serif] text-[12px] leading-none text-[#e6c94a]">TeX</div>
        </TaskIcon>
        <TaskIcon on>
          <svg width="32" height="38" viewBox="0 0 32 38">
            <path d="M14 1l7 8-6 8-7-8z" fill="#f77f7f" /><path d="M7 10l7 9-7 9-7-9z" fill="#4f9be8" /><path d="M23 11l9 9-9 8-7-9z" fill="#74b84e" /><path d="M16 21l8 8-8 9-8-9z" fill="#f5e07b" />
          </svg>
        </TaskIcon>
        <TaskIcon on>
          <svg width="30" height="38" viewBox="0 0 30 38">
            <path d="M1 23l9-7 5 6-7 5z" fill="#3f8ec7" />
            <path d="M18 1c3 8 7 24 11 32-4-3-6-6-8-10-2 3-3 6-5 8-1-4-2-7-4-9 3-4 4-13 6-21z" fill="#e8862a" />
          </svg>
        </TaskIcon>
      </div>
      <div className="ml-auto flex h-full items-center pr-[31px]">
        <ChevronUp size={24} strokeWidth={1.400} />
        <Video size={18} strokeWidth={1.500} className="ml-[10px] rotate-90" />
        <svg className="ml-[10px]" width="20" height="18" viewBox="0 0 20 18" fill="#fff">
          <path d="M4 16c-5 0-5-7 0-7 1-7 11-8 13-1 4 1 4 8-1 8z" />
          <path d="M8 7v6M12 7v6" stroke="#101010" strokeWidth="1.800" />
        </svg>
        <Volume2 size={22} strokeWidth={1.400} className="ml-[8px]" />
        <svg className="ml-[10px]" width="22" height="22" viewBox="0 0 22 22" fill="none" stroke="#fff" strokeWidth="1.300">
          <path d="M2 21C2 10 10 2 21 2M6 21c0-8 7-15 15-15M10 21c0-6 5-11 11-11" />
          <circle cx="18" cy="19" r="1.500" fill="#fff" stroke="none" />
        </svg>
        <BatteryMedium size={22} strokeWidth={1.400} className="ml-[8px]" />
        <div className="ml-[10px] flex w-[70px] flex-col items-center text-[14.500px] leading-[24px] tracking-[-0.2px] text-[#f0f0f0]">
          <span>4:52 AM</span><span>3/6/2021</span>
        </div>
        <div className="relative ml-[21px] h-[30px] w-[22px]">
          <svg width="20" height="24" viewBox="0 0 20 24" fill="#fff"><path d="M0 0h20v24H0z" /><path d="M3 6h14M3 11h14M3 16h10" stroke="#111" strokeWidth="1.500" /></svg>
          <span className="absolute bottom-[-4px] right-[-8px] flex h-[21px] w-[21px] items-center justify-center rounded-full border border-[#888] bg-[#222] text-[14px]">1</span>
        </div>
      </div>
    </div>
  )
}

export default function App() {
  return (
    <div className="flex h-[1080px] w-[1920px] flex-col overflow-hidden bg-[#404040]">
      <TitleBar />
      <MenuBar />
      <TabBar />
      <ToolBar />
      <div className="flex min-h-0 flex-1">
        <LeftRail />
        <BookmarksPanel />
        <DocArea />
        <RightRail />
      </div>
      <TaskBar />
    </div>
  )
}
